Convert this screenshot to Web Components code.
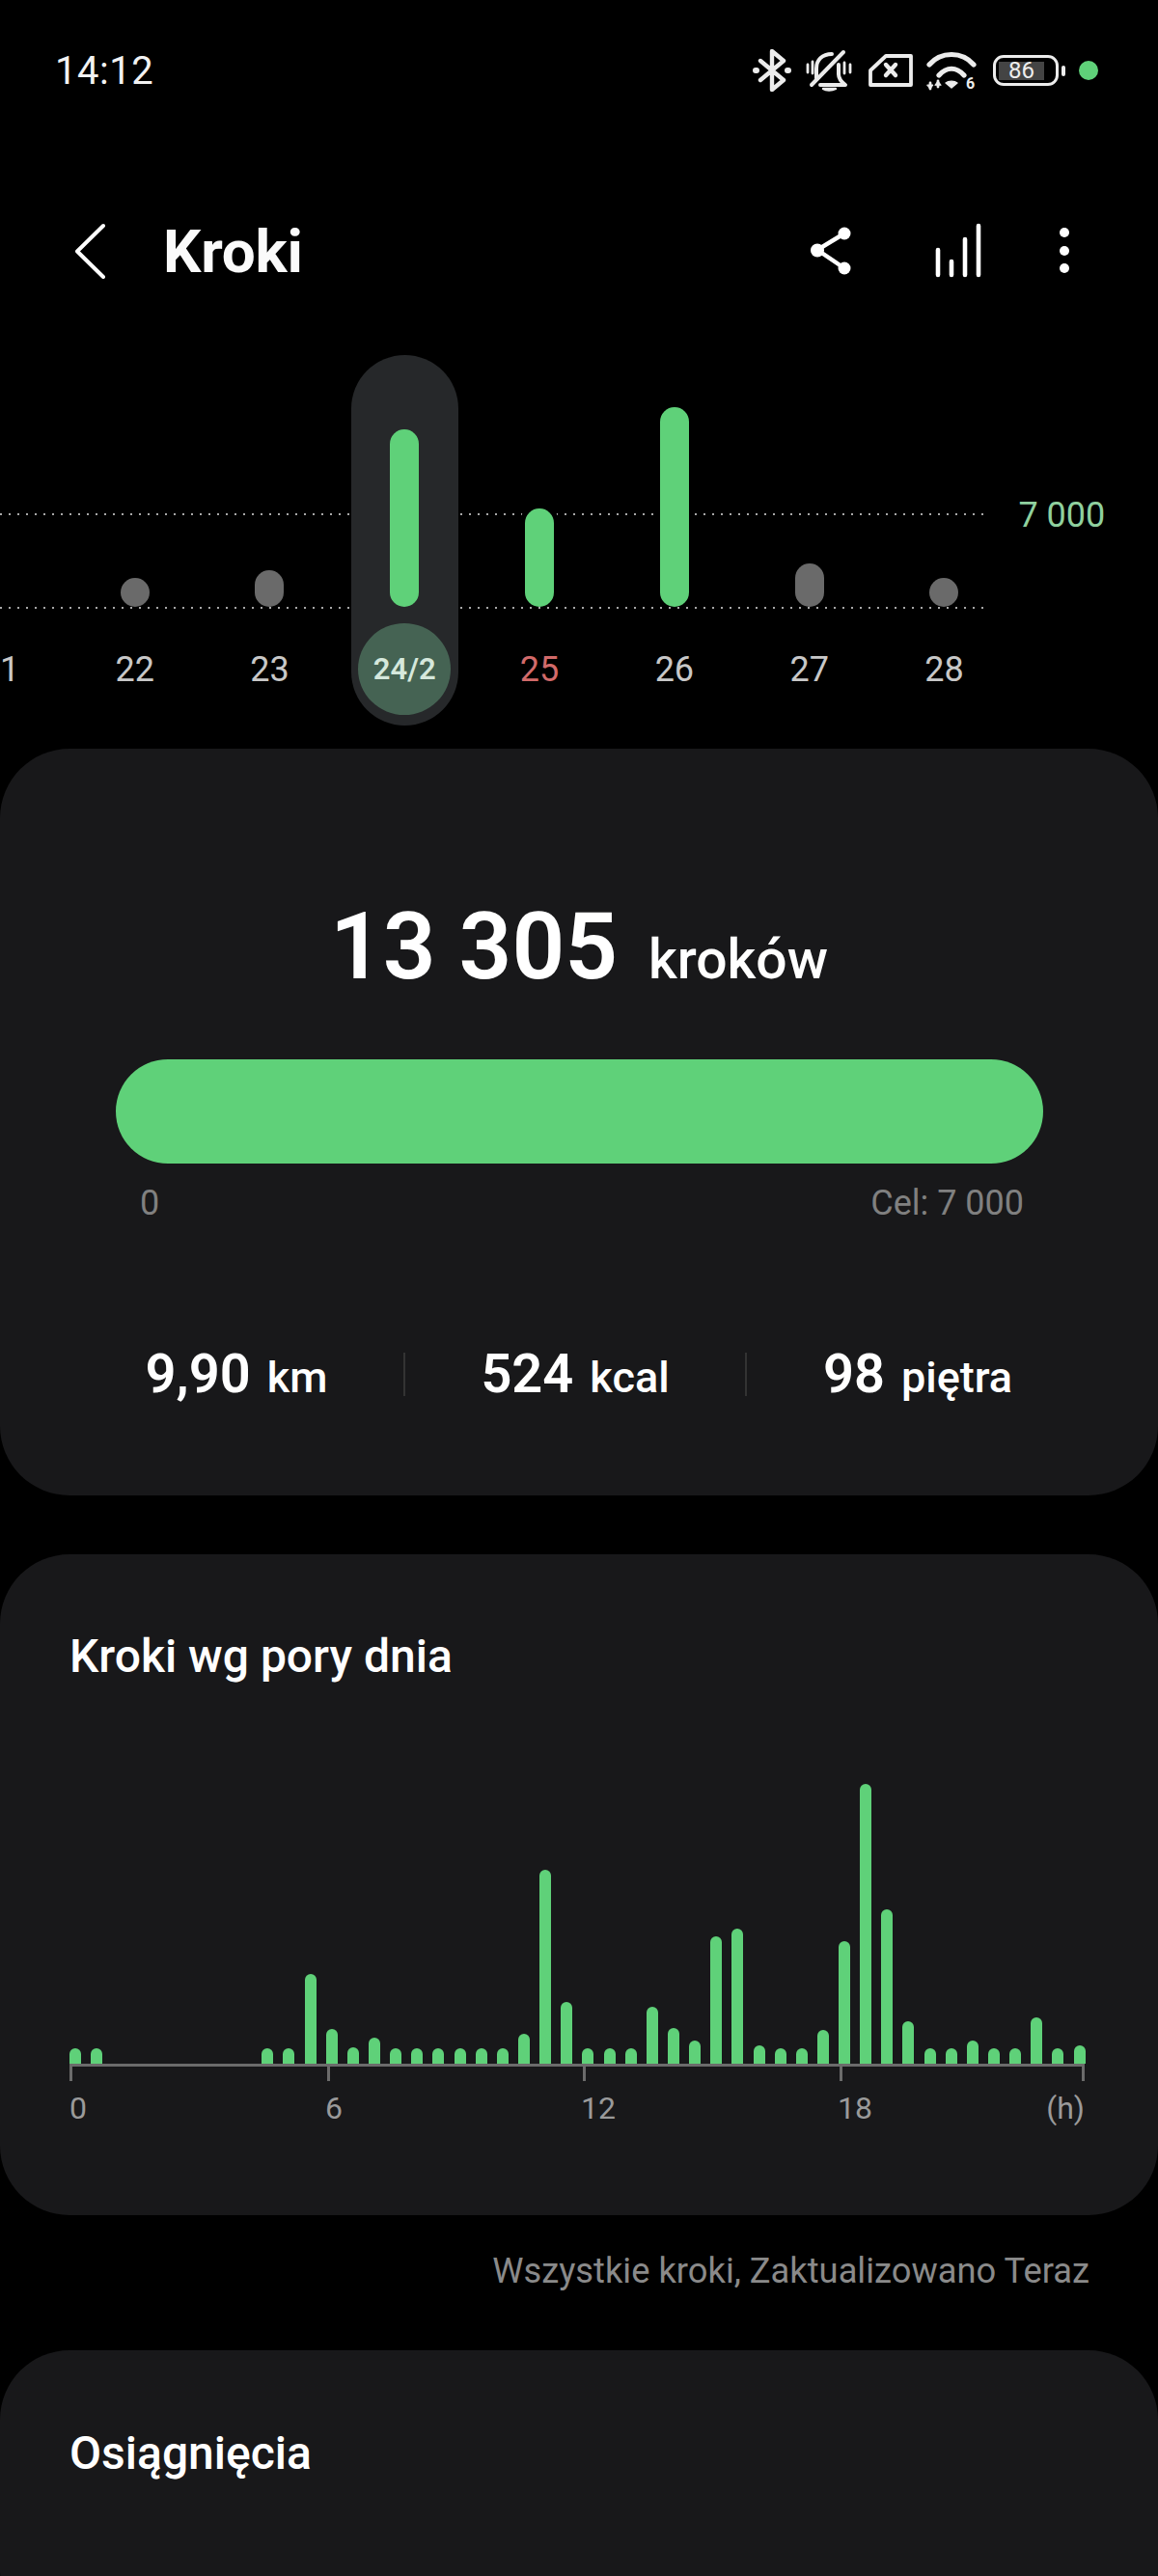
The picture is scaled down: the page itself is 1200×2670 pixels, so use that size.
<!DOCTYPE html>
<html lang="pl">
<head>
<meta charset="utf-8">
<title>Kroki</title>
<style>
html,body{margin:0;padding:0;background:#000}
body{width:1200px;height:2670px;overflow:hidden;font-family:Roboto,"Liberation Sans",sans-serif;color:#fff}
main-page{height:2670px}
</style>
</head>
<body>
<main-page>
  <status-bar></status-bar>
  <app-header title="Kroki"></app-header>
  <week-chart></week-chart>
  <steps-card></steps-card>
  <hourly-card></hourly-card>
  <foot-note>Wszystkie kroki, Zaktualizowano Teraz</foot-note>
  <info-card><card-title>Osiągnięcia</card-title></info-card>
</main-page>
<nav-bar></nav-bar>

<script>
const GREEN='#5fd179'

class MainPage extends HTMLElement{
    constructor(){
        super();
        this.attachShadow({mode:'open'}).innerHTML=`<style>
        :host{display:block;width:1200px;height:2622px;overflow:hidden}
        </style><slot></slot>`
    }
}

class StatusBar extends HTMLElement{
    constructor(){
        super();
        this.attachShadow({mode:'open'}).innerHTML=`<style>
        :host{display:flex;align-items:center;height:144px;padding:2px 62px 0 57px;box-sizing:border-box;justify-content:space-between}
        .time{font-size:40px;letter-spacing:.5px;color:#f2f2f2}
        .icons{display:flex;align-items:center}
        svg{display:block;fill:none;stroke:#ececec;stroke-linecap:round;stroke-linejoin:round}
        .dot{width:20px;height:20px;border-radius:50%;background:${GREEN};margin-left:14px}
        .battery{width:68px;height:32px;border:3.5px solid #ececec;border-radius:11px;box-sizing:border-box;display:flex;align-items:center;padding-left:3px;margin-left:17px}
        .level{width:47px;height:19px;background:#444;font-size:24px;line-height:19px;text-align:center;color:#eee}
        .nub{width:4px;height:11px;border-radius:2px;background:#ececec;margin-left:3px}
        </style>
        <div class="time">14:12</div>
        <div class="icons">
          <svg width="40" height="44" viewBox="0 0 40 44" stroke-width="4.4">
            <path d="M8 12 32 32 20 42V2L32 12 8 32"/>
            <path d="M3 22h1M36 22h1" stroke-width="6"/>
          </svg>
          <svg width="50" height="44" viewBox="0 0 50 44" stroke-width="4" style="margin-left:15px">
            <path d="M2 16v8M7 13v12M40 14v11M46 16v8" stroke-width="2.8"/>
            <path d="M11 30V20C11 11 17 5 27 5"/>
            <path d="M34 16V26c0 4 3 8 7 11H15"/>
            <path d="M6 37 39 3"/>
            <path d="M18 41c3 2 9 2 13 0z" fill="#ececec" stroke-width="2.4"/>
          </svg>
          <svg width="46" height="34" viewBox="0 0 46 34" stroke-width="3.8" style="margin-left:15px">
            <path d="M2 17 18 2H44V32H2Z"/>
            <path d="M18 11 28 22M28 11 18 22" stroke-width="4.4"/>
          </svg>
          <svg width="52" height="44" viewBox="0 0 52 44" stroke-width="5.2" style="margin-left:14px">
            <path d="M3 16C15 2 37 2 49 16"/>
            <path d="M13 27C21 18 31 18 39 27"/>
            <path d="M20 35c3-2.5 9-2.5 12 0l-6 5z" fill="#ececec" stroke-width="1.4"/>
            <path d="M4 35v6M12 33v6" stroke-width="2.8"/>
            <path d="M1 37h6L4 41zM9 37l3-4 3 4z" fill="#ececec" stroke-width="1"/>
            <text x="41" y="41" font-family="Roboto,sans-serif" font-size="16" font-weight="700" fill="#ececec" stroke="none">6</text>
          </svg>
          <div class="battery"><div class="level">86</div></div>
          <div class="nub"></div>
          <div class="dot"></div>
        </div>`
    }
}

class AppHeader extends HTMLElement{
    constructor(){
        super();
        this.attachShadow({mode:'open'}).innerHTML=`<style>
        :host{display:flex;align-items:center;height:224px;padding-top:8px;box-sizing:border-box;padding-left:78px;padding-right:91px}
        svg{display:block;fill:none;stroke:#fff;stroke-linecap:round;stroke-linejoin:round}
        h1{font-size:62px;font-weight:700;margin:0 0 0 59px;letter-spacing:-.2px;flex:1;color:#fafafa}
        .acts{display:flex;align-items:center}
        </style>
        <svg width="32" height="58" viewBox="0 0 32 58" stroke-width="4"><path d="M29 3 2 29.5 29 56"/></svg>
        <h1>${this.getAttribute('title')}</h1>
        <div class="acts">
          <svg width="46" height="52" viewBox="0 0 46 52">
            <path d="M37 8 9 25 37 44" stroke-width="4.5"/>
            <circle cx="37" cy="8" r="6.5" fill="#fff" stroke-width="0"/>
            <circle cx="9" cy="25.5" r="7" fill="#fff" stroke-width="0"/>
            <circle cx="37" cy="44" r="6.5" fill="#fff" stroke-width="0"/>
          </svg>
          <svg width="52" height="58" viewBox="0 0 52 58" stroke-width="4.6" style="margin-left:85px">
            <path d="M3 54V28M17 54V40M31 54V17M45 54V3"/>
          </svg>
          <svg width="12" height="50" viewBox="0 0 12 50" style="margin-left:76px">
            <circle cx="6" cy="6" r="5" fill="#fff" stroke-width="0"/>
            <circle cx="6" cy="25" r="5" fill="#fff" stroke-width="0"/>
            <circle cx="6" cy="43" r="5" fill="#fff" stroke-width="0"/>
          </svg>
        </div>`
    }
}

class DayCol extends HTMLElement{
    constructor(){
        super();
        const h=this.getAttribute('h');
        const tone=this.getAttribute('tone');
        const day=this.getAttribute('day');
        const sel=this.hasAttribute('selected');
        this.attachShadow({mode:'open'}).innerHTML=`<style>
        :host{display:flex;justify-content:center;width:139.8px;flex:none}
        .col{width:111px;height:384px;border-radius:56px;display:flex;flex-direction:column;align-items:center}
        .col.sel{background:#26282a;box-shadow:0 0 0 2px #000}
        .area{height:261px;display:flex;align-items:flex-end;justify-content:center}
        .bar{width:30px;border-radius:15px}
        .green{background:${GREEN};box-shadow:-4px -4px 0 #000,4px -4px 0 #000}
        .sel .green{box-shadow:none}
        .gray{background:#6a6a6a}
        .lab{margin-top:17px;width:96px;height:95px;border-radius:50%;display:flex;align-items:center;justify-content:center;font-size:36px;color:#c8c8c8}
        .red{color:#d26a6a}
        .sel .lab{background:#456353;color:#d5e8dc;font-size:31px;font-weight:600}
        </style>
        <div class="col ${sel?'sel':''}">
          <div class="area"><div class="bar ${tone}" style="height:${h}px"></div></div>
          <div class="lab ${this.hasAttribute('red')?'red':''}">${day}</div>
        </div>`
    }
}

class WeekChart extends HTMLElement{
    constructor(){
        super();
        const dots='repeating-linear-gradient(90deg,#a8a8a8 0 2px,transparent 2px 9px)';
        this.attachShadow({mode:'open'}).innerHTML=`<style>
        :host{display:flex;height:384px;width:1200px;overflow:hidden;
          background-image:${dots},${dots};
          background-size:1019px 2px,1019px 2px;
          background-position:0 164px,0 261px;
          background-repeat:no-repeat}
        .cols{display:flex;margin-left:-70px;flex:none}
        .goal{font-size:36px;color:#8fd09e;margin-left:7px;padding-top:146px;line-height:40px;white-space:nowrap}
        </style>
        <div class="cols">
          <day-col day="21" h="0" tone="gray"></day-col>
          <day-col day="22" h="30" tone="gray"></day-col>
          <day-col day="23" h="38" tone="gray"></day-col>
          <day-col day="24/2" h="184" tone="green" selected></day-col>
          <day-col day="25" h="102" tone="green" red></day-col>
          <day-col day="26" h="207" tone="green"></day-col>
          <day-col day="27" h="45" tone="gray"></day-col>
          <day-col day="28" h="30" tone="gray"></day-col>
        </div>
        <div class="goal">7 000</div>`
    }
}

class InfoCard extends HTMLElement{
    constructor(){
        super();
        this.attachShadow({mode:'open'}).innerHTML=`<style>
        :host{display:block;background:#18181a;border-radius:72px;height:300px;padding:80px 72px;box-sizing:border-box}
        </style><slot></slot>`
    }
}

class CardTitle extends HTMLElement{
    constructor(){
        super();
        this.attachShadow({mode:'open'}).innerHTML=`<style>
        :host{display:block;font-size:48px;font-weight:500;line-height:54px;color:#fff}
        </style><slot></slot>`
    }
}

class StatItem extends HTMLElement{
    constructor(){
        super();
        this.attachShadow({mode:'open'}).innerHTML=`<style>
        :host{display:flex;align-items:baseline;justify-content:center;gap:17px;height:45px;line-height:45px;font-weight:500;white-space:nowrap;box-sizing:border-box}
        :host(:not(:last-child)){border-right:2px solid #333}
        :host(:first-child){padding-left:6px}
        b{font-size:56px;font-weight:600}
        span{font-size:45px}
        </style><b>${this.getAttribute('value')}</b><span>${this.getAttribute('unit')}</span>`
    }
}

class StepsCard extends HTMLElement{
    constructor(){
        super();
        this.attachShadow({mode:'open'}).innerHTML=`<style>
        :host{display:block;background:#18181a;border-radius:72px;height:774px;margin-top:24px;padding-top:149px;box-sizing:border-box}
        .head{display:flex;justify-content:center;align-items:baseline;gap:32px;height:112px;line-height:112px;font-weight:500}
        .num{font-size:96px;font-weight:600}
        .unit{font-size:57px}
        .bar{height:108px;margin:61px 119px 0 120px;border-radius:54px;background:${GREEN}}
        .scale{display:flex;justify-content:space-between;margin:20px 139px 0 145px;font-size:36px;line-height:42px;color:#808080}
        .stats{display:grid;grid-template-columns:repeat(3,354px);margin:134px 0 0 66px}
        </style>
        <div class="head"><span class="num">13 305</span><span class="unit">kroków</span></div>
        <div class="bar"></div>
        <div class="scale"><span>0</span><span>Cel: 7 000</span></div>
        <div class="stats">
          <stat-item value="9,90" unit="km"></stat-item>
          <stat-item value="524" unit="kcal"></stat-item>
          <stat-item value="98" unit="piętra"></stat-item>
        </div>`
    }
}

class HourlyCard extends HTMLElement{
    constructor(){
        super();
        const heights=[16,16,0,0,0,0,0,0,0,16,16,93,36,17,27,16,16,16,16,16,16,31,201,64,
            16,16,16,59,37,24,132,140,19,16,16,35,127,290,160,44,16,16,24,16,16,48,16,19];
        const bars=heights.map(h=>`<i style="height:${h}px"></i>`).join('');
        this.attachShadow({mode:'open'}).innerHTML=`<style>
        :host{display:block;background:#18181a;border-radius:72px;height:685px;margin-top:61px;padding:79px 0 0 72px;box-sizing:border-box}
        .bars{display:flex;justify-content:space-between;align-items:flex-end;width:1053px;height:395px}
        i{display:block;width:12px;border-radius:6px 6px 0 0;background:${GREEN}}
        .axis{width:1052px;height:3px;background:#6b6b6b}
        .ticks,.labs{display:grid;width:1052px}
        .ticks{grid-template-columns:267px 265px 266px 1fr auto}
        .ticks u{display:block;width:3px;height:15px;background:#6b6b6b}
        .labs{grid-template-columns:265px 265px 266px 1fr auto;margin-top:8px;font-size:32px;line-height:40px;color:#9a9a9a}
        </style>
        <card-title>Kroki wg pory dnia</card-title>
        <div class="bars">${bars}</div>
        <div class="axis"></div>
        <div class="ticks"><u></u><u></u><u></u><u></u><u></u></div>
        <div class="labs"><span>0</span><span>6</span><span>12</span><span>18</span><span>(h)</span></div>`
    }
}

class FootNote extends HTMLElement{
    constructor(){
        super();
        this.attachShadow({mode:'open'}).innerHTML=`<style>
        :host{display:block;height:140px;padding:36px 71px 0 0;box-sizing:border-box;text-align:right;font-size:36.3px;line-height:44px;color:#8a8a8a}
        </style><slot></slot>`
    }
}

class NavBar extends HTMLElement{
    constructor(){
        super();
        this.attachShadow({mode:'open'}).innerHTML=`<style>
        :host{display:flex;justify-content:center;height:48px;padding-top:19px;box-sizing:border-box;background:#000}
        div{width:456px;height:11px;border-radius:6px;background:#b0b0b0}
        </style><div></div>`
    }
}

customElements.define('main-page',MainPage)
customElements.define('status-bar',StatusBar)
customElements.define('app-header',AppHeader)
customElements.define('day-col',DayCol)
customElements.define('week-chart',WeekChart)
customElements.define('info-card',InfoCard)
customElements.define('card-title',CardTitle)
customElements.define('stat-item',StatItem)
customElements.define('steps-card',StepsCard)
customElements.define('hourly-card',HourlyCard)
customElements.define('foot-note',FootNote)
customElements.define('nav-bar',NavBar)
</script>
</body>
</html>
